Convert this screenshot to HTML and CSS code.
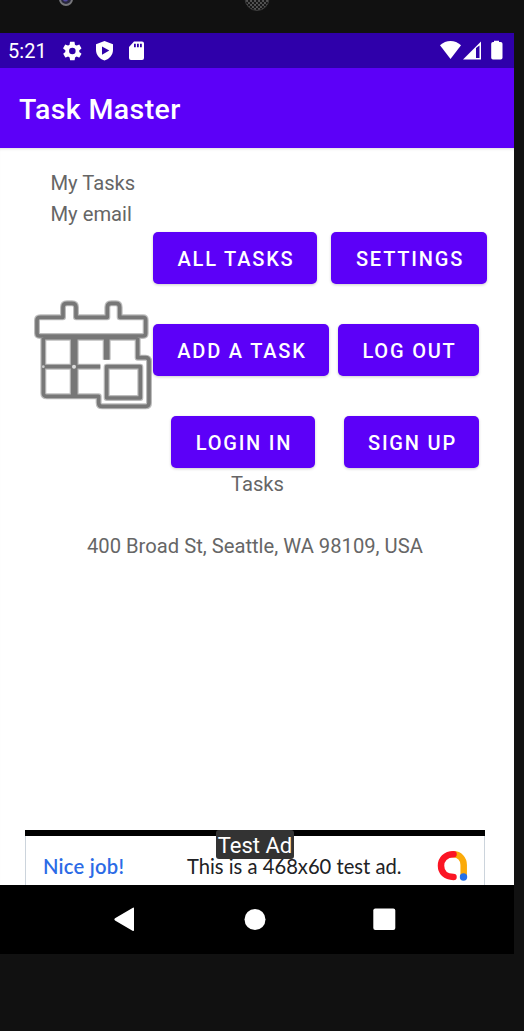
FILE: index.html
```
<!DOCTYPE html>
<html lang="en">
<head>
<meta charset="utf-8">
<title>Task Master</title>
<link rel="stylesheet" href="styles.css">
</head>
<body>
<div class="device">
  <div class="bezel">
    <svg width="524" height="33" viewBox="0 0 524 33">
      <circle cx="66" cy="-1" r="7" fill="#77777b"/><circle cx="66" cy="-1" r="5" fill="#29283c"/><circle cx="65.500" cy="-1" r="2.500" fill="#5148a0"/>
      <defs><pattern id="mesh" width="4" height="4" patternUnits="userSpaceOnUse"><rect width="4" height="4" fill="#555"/><circle cx="1" cy="1" r="1.200" fill="#161616"/><circle cx="3" cy="3" r="1.200" fill="#161616"/></pattern></defs>
      <circle cx="257" cy="-1.500" r="12" fill="url(#mesh)" stroke="#3b3b3b"/>
    </svg>
  </div>
  <main class="screen">
    <div class="status">
      <span class="clock">5:21</span>
      <svg class="status-left" width="84" height="22" viewBox="0 0 84 22" fill="#fff">
        <g transform="translate(-.8 -.1) scale(.93)"><path fill-rule="evenodd" d="M19.400 13c0-.3.100-.6.100-1s0-.7-.1-1l2.100-1.600c.2-.2.200-.4.100-.6l-2-3.500c-.1-.2-.4-.3-.6-.2l-2.500 1c-.5-.4-1.100-.7-1.700-1l-.4-2.600c0-.2-.2-.4-.5-.4h-4c-.2 0-.4.200-.5.400L9 5.100c-.6.300-1.100.6-1.700 1l-2.500-1c-.2-.1-.5 0-.6.200l-2 3.500c-.1.200-.1.500.1.600L4.500 11c0 .3-.1.700-.1 1s0 .7.100 1l-2.100 1.600c-.2.200-.2.400-.1.600l2 3.500c.1.200.4.300.6.200l2.500-1c.5.400 1.100.7 1.700 1l.4 2.600c0 .2.200.4.500.4h4c.2 0 .4-.2.500-.4l.4-2.600c.6-.3 1.100-.6 1.700-1l2.500 1c.2.100.5 0 .6-.2l2-3.500c.1-.2.100-.5-.1-.6L19.400 13zM12 15.500a3.500 3.500 0 1 1 0-7 3.500 3.500 0 0 1 0 7z"/></g>
        <path fill-rule="evenodd" d="M42.500 1 51 4.200V10C51 15 47.500 19 42.500 20.500 37.500 19 34 15 34 10V4.200ZM40 6.500v8.200L47.300 10.500Z"/>
        <path fill-rule="evenodd" d="M72 1.500H80Q82 1.500 82 3.500V18Q82 20 80 20H69Q67 20 67 18V7ZM72 3.700v3.500h1.800V3.700ZM75 3.700v3.500h1.800V3.700ZM78 3.700v3.500h1.800V3.700Z"/>
      </svg>
      <svg class="status-right" width="64" height="22" viewBox="0 0 64 22" fill="#fff">
        <path d="M0 5.300C6-.4 15-.4 21 5.300L10.500 19Z"/>
        <path fill-rule="evenodd" d="M41 1.500V19.500H23ZM36 7.900V18h3.500V5.500Z"/>
        <path d="M54 2V.8h5V2h1.700Q62.500 2 62.500 3.700V17.700Q62.500 19.500 60.700 19.500H53Q51.200 19.500 51.200 17.700V3.700Q51.200 2 53 2Z"/>
      </svg>
    </div>
    <header class="appbar">Task Master</header>
    <section class="content">
      <p class="label">My Tasks</p>
      <p class="label">My email</p>
      <div class="actions">
        <svg class="calendar" width="133" height="130" viewBox="0 0 399 390" fill="none">
          <defs><g id="cal" stroke-linejoin="round">
            <path d="M61 82H129V52Q129 40 141 40H156Q168 40 168 52V82H262V52Q262 40 274 40H288Q299 40 299 52V82H369Q377 82 377 90V130Q377 138 369 138H60Q51 138 51 130V91Q51 82 61 82Z"/>
            <path d="M70 144V310Q70 319 80 319H236V338Q236 349 247 349H377Q387 349 387 339V214Q387 203 377 203H353V144M70 230H241M260 230H361V324H260Z"/>
            <path d="M70 143H353M158 144V315M167 144V315M257 144V209M263 144V209"/>
          </g></defs>
          <use href="#cal" stroke="#bdbdbd" stroke-width="18"/>
          <use href="#cal" stroke="#777" stroke-width="11"/>
          <circle cx="162" cy="230" r="6" fill="#ddd"/>
          <circle cx="70" cy="230" r="4" fill="#ccc"/>
        </svg>
        <div class="buttons">
          <div class="row"><button class="btn all">ALL TASKS</button><button class="btn settings">SETTINGS</button></div>
          <div class="row"><button class="btn add">ADD A TASK</button><button class="btn logout">LOG OUT</button></div>
          <div class="row"><button class="btn login">LOGIN IN</button><button class="btn signup">SIGN UP</button></div>
        </div>
      </div>
      <p class="tasks">Tasks</p>
      <p class="address">400 Broad St, Seattle, WA 98109, USA</p>
      <div class="ad">
        <span class="nice">Nice job!</span>
        <span class="copy">This is a 468x60 test ad.</span>
        <svg class="admob" width="32" height="32" viewBox="0 0 32 32" fill="none" stroke-linecap="round" stroke-width="6.500">
          <path d="M17.500 4.300C23.500 4.300 27.700 9 27.700 15V26" stroke="#fbaa09"/>
          <path d="M17.500 4.300C9.500 4.300 5 9.500 5 15.800S9.500 27 17.500 27" stroke="#fb1524"/>
          <circle cx="27.500" cy="27" r="3.700" fill="#2670e8"/>
        </svg>
        <span class="test">Test Ad</span>
      </div>
    </section>
    <nav class="nav">
      <svg width="514" height="69" viewBox="0 0 514 69" fill="#fff">
        <path d="M134 23.500V45Q134 46.500 132.500 45.700L115 35.500Q113.500 34.400 115 33.300L132.500 23Q134 22 134 23.500Z"/>
        <circle cx="255" cy="34.500" r="10.500"/><rect x="373.300" y="23.500" width="22" height="21.500" rx="2"/>
      </svg>
    </nav>
  </main>
</div>
</body>
</html>
```

FILE: styles.css
```
* { box-sizing: border-box; }
body { margin: 0; background: #111; font-family: Roboto, sans-serif; }
p { margin: 0; }
.device { width: 524px; height: 1031px; background: #111; overflow: hidden; }
.bezel { height: 33px; }
.bezel svg { display: block; }
.screen { width: 514px; height: 921px; background: #fff; display: flex; flex-direction: column; }
.status { height: 35px; background: #2f00aa; color: #fff; display: flex; align-items: center; padding: 0 10px 0 8px; }
.clock { font-size: 20px; width: 54px; letter-spacing: .1px; padding-top: 1px; }
.status-left { display: block; }
.status-right { display: block; margin-left: auto; margin-top: 1px; }
.appbar { height: 80px; background: #5c00f8; color: #fff; font-size: 28.5px; font-weight: 500; line-height: 83px; padding-left: 19px; letter-spacing: .4px; }
.content { height: 737px; display: flex; flex-direction: column; padding-top: 20px; color: #666; font-size: 20.2px; box-shadow: inset 0 3px 3px -2px #ddd; }
.label { height: 31px; line-height: 31px; padding-left: 50.5px; }
.actions { display: flex; padding: 2px 0 0 20px; }
.calendar { display: block; flex: none; margin-top: 58px; }
.buttons { display: flex; flex-direction: column; gap: 40px; }
.row { display: flex; height: 52px; }
.btn { border: 0; padding: 1px 0 0 2px; border-radius: 5px; background: #5c00f8; color: #fff; font: 500 20px Roboto, sans-serif; letter-spacing: 1.8px; box-shadow: 0 1px 3px #0003; height: 52px; }
.all { width: 164px; margin-right: 14px; }
.settings { width: 156px; }
.add { width: 176px; margin-right: 9px; }
.logout { width: 141px; }
.login { width: 144px; margin: 0 29px 0 18px; }
.signup { width: 135px; }
.tasks { line-height: 31px; padding: 1px 0 0 231px; }
.address { line-height: 31px; padding-left: 87px; margin-top: 31px; }
.ad { position: relative; display: flex; align-items: center; width: 460px; height: 55px; margin: auto 0 0 25px; padding: 10px 17px 0; border-top: 6px solid #000; box-shadow: inset 1px 0 #ccd4dc, inset -1px 0 #ccd4dc; font-family: Lato, sans-serif; font-size: 20.2px; color: #202124; }
.nice { color: #2c6be6; font-weight: 600; width: 145px; padding-left: 1px; letter-spacing: .25px; }
.copy { flex: 1; white-space: nowrap; }
.admob { flex: none; }
.test { position: absolute; left: 191px; top: -6px; width: 78px; height: 29px; border-radius: 3px; background: #333; color: #fff; font: 22px/32px Roboto, sans-serif; text-align: center; }
.nav { height: 69px; background: #000; }
.nav svg { display: block; }
```
